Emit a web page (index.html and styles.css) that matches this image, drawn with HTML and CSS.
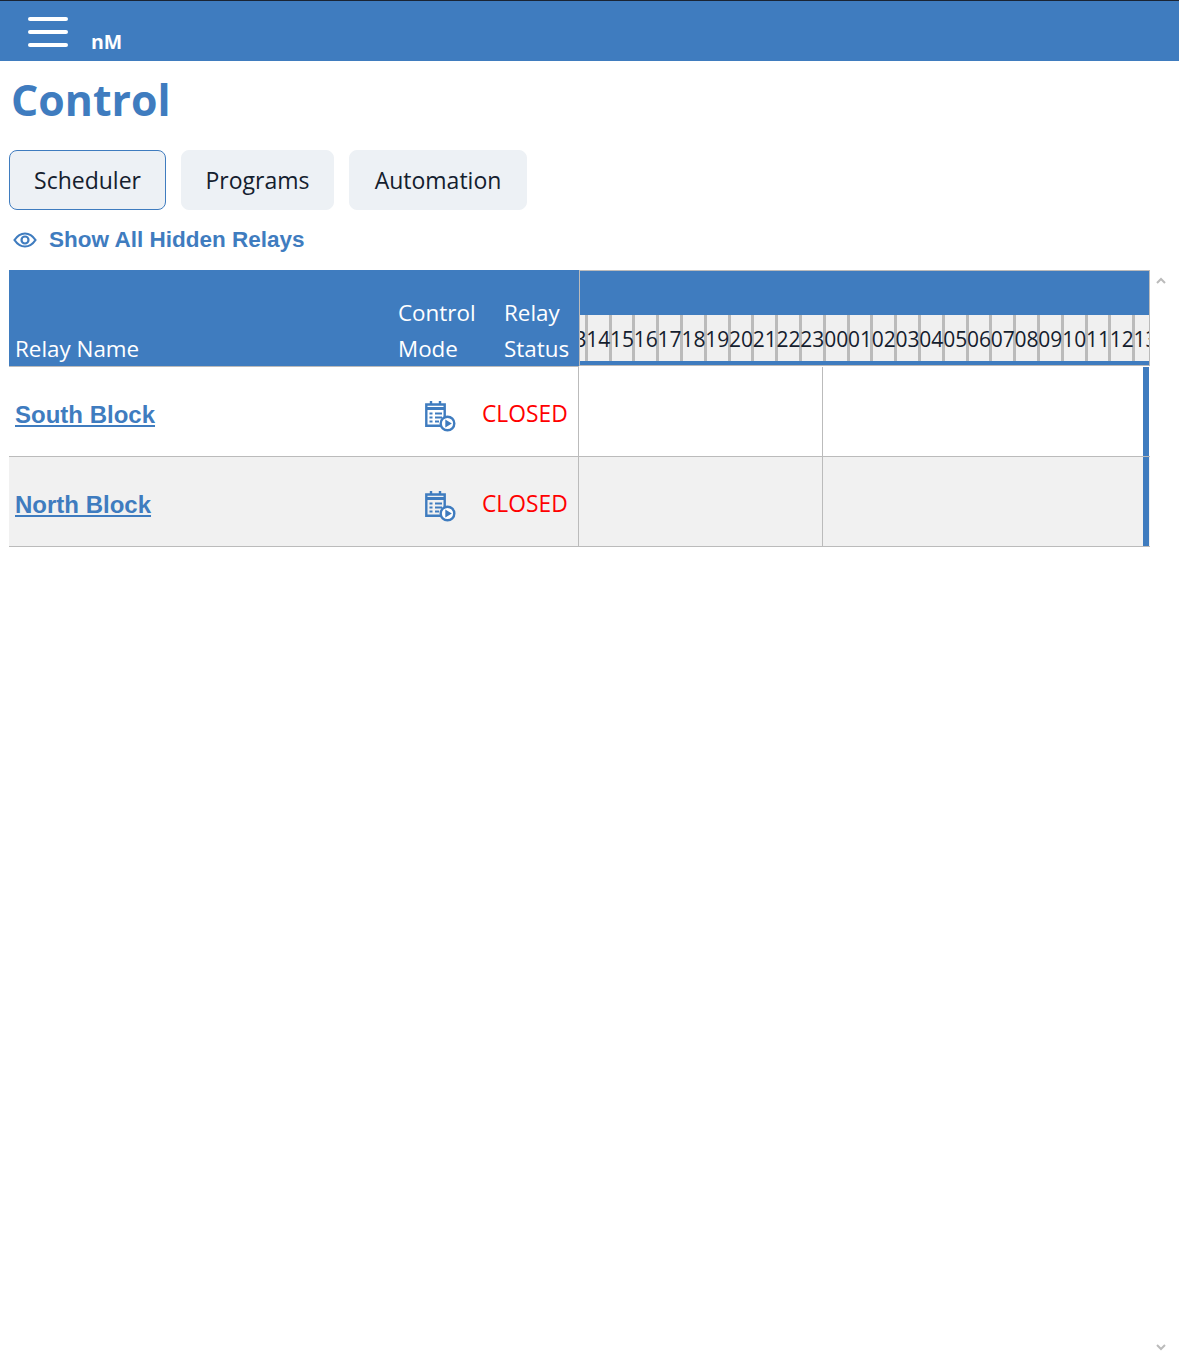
FILE: index.html
```html
<!DOCTYPE html>
<html lang="en">
<head>
<meta charset="utf-8">
<title>Control</title>
<link rel="stylesheet" href="styles.css">
</head>
<body>
<header class="topbar">
  <button class="burger" aria-label="Menu"><span></span><span></span><span></span></button>
  <span class="brand">nM</span>
</header>
<main class="page">
  <h1 class="title">Control</h1>
  <nav class="tabs">
    <a class="tab tab-active">Scheduler</a>
    <a class="tab">Programs</a>
    <a class="tab">Automation</a>
  </nav>
  <a class="show-hidden">
    <svg class="eye" viewBox="0 0 24 16" width="24" height="16" fill="none" stroke="#3f7cbf" stroke-width="2.200"><path d="M1.500 8C4.500 3.500 8 1.500 12 1.500S19.500 3.500 22.500 8C19.500 12.500 16 14.500 12 14.500S4.500 12.500 1.500 8Z"/><circle cx="12" cy="8" r="3.500"/></svg>
    <span>Show All Hidden Relays</span>
  </a>
  <section class="sched">
    <div class="thead">
      <div class="thead-cols">
        <div class="th th-name">Relay Name</div>
        <div class="th">Control<br>Mode</div>
        <div class="th">Relay<br>Status</div>
      </div>
      <div class="thead-chart">
        <div class="band"></div>
        <div class="hours">
          <span class="hour hour-first">13</span><span class="hour">14</span><span class="hour">15</span><span class="hour">16</span><span class="hour">17</span><span class="hour">18</span><span class="hour">19</span><span class="hour">20</span><span class="hour">21</span><span class="hour">22</span><span class="hour">23</span><span class="hour">00</span><span class="hour">01</span><span class="hour">02</span><span class="hour">03</span><span class="hour">04</span><span class="hour">05</span><span class="hour">06</span><span class="hour">07</span><span class="hour">08</span><span class="hour">09</span><span class="hour">10</span><span class="hour">11</span><span class="hour">12</span><span class="hour">13</span>
        </div>
      </div>
    </div>
    <div class="row">
      <a class="relay-link">South Block</a>
      <div class="mode">
        <svg class="cal" viewBox="0 0 31 31" width="31" height="31"><use href="#cal-icon"/></svg>
      </div>
      <div class="status">CLOSED</div>
      <div class="slot slot-a"></div>
      <div class="slot slot-b"></div>
    </div>
    <div class="row row-alt">
      <a class="relay-link">North Block</a>
      <div class="mode">
        <svg class="cal" viewBox="0 0 31 31" width="31" height="31"><use href="#cal-icon"/></svg>
      </div>
      <div class="status">CLOSED</div>
      <div class="slot slot-a"></div>
      <div class="slot slot-b"></div>
    </div>
  </section>
</main>
<svg class="defs" width="0" height="0">
  <symbol id="cal-icon" viewBox="0 0 31 31">
    <path d="M1.300 3.500H19.700V24.700H1.300Z" fill="none" stroke="#3f7cbf" stroke-width="2.400"/>
    <path d="M1 7.500H20" stroke="#3f7cbf" stroke-width="3"/>
    <path d="M6 0V4M15 0V4" stroke="#3f7cbf" stroke-width="2.400"/>
    <path d="M4.500 12.500H7.500M10 12.500H17M4.500 16.500H7.500M10 16.500H17M4.500 20.500H7.500M10 20.500H14" stroke="#3f7cbf" stroke-width="1.800"/>
    <circle cx="22.500" cy="22.500" r="6.800" fill="#fff" stroke="#3f7cbf" stroke-width="2.400"/>
    <path d="M20.300 18.500V26.500L26.800 22.500Z" fill="#3f7cbf"/>
  </symbol>
</svg>
<svg class="scroll-up" viewBox="0 0 10 7" width="10" height="7" fill="none" stroke="#bbb" stroke-width="2"><path d="M1 6L5 2L9 6"/></svg>
<svg class="scroll-down" viewBox="0 0 10 7" width="10" height="7" fill="none" stroke="#bbb" stroke-width="2"><path d="M1 1L5 5L9 1"/></svg>
</body>
</html>
```
FILE: styles.css
```css
* { box-sizing: border-box; }
html, body { margin: 0; padding: 0; background: #fff; }
body {
  position: relative;
  height: 1351px;
  overflow: hidden;
  font-family: "Open Sans", "Noto Sans", sans-serif;
  color: #14202e;
}
.topbar {
  height: 61px;
  background: #3f7cbf;
  border-top: 1px solid #1a2433;
  display: flex;
  align-items: flex-start;
}
.burger {
  margin: 16px 0 0 28px;
  padding: 0;
  width: 40px;
  height: 30px;
  border: 0;
  background: none;
  display: flex;
  flex-direction: column;
  justify-content: space-between;
}
.burger span {
  display: block;
  height: 4px;
  border-radius: 2px;
  background: #fff;
}
.brand {
  margin: 28px 0 0 23px;
  font-size: 19.500px;
  line-height: 26px;
  font-weight: 700;
  color: #fff;
}
.page { padding: 0 0 0 9px; }
.title {
  margin: 9px 0 0 2px;
  font-size: 42.800px;
  line-height: 60px;
  font-weight: 700;
  color: #3f7cbf;
}
.tabs {
  display: grid;
  grid-template-columns: 157px 153px 178px;
  gap: 15px;
  margin-top: 20px;
}
.tab {
  height: 60px;
  display: flex;
  align-items: center;
  justify-content: center;
  border: 1px solid #edf1f5;
  border-radius: 8px;
  background: #edf1f5;
  font-size: 23px;
  font-weight: 500;
  color: #14202e;
}
.tab-active { border-color: #3f7cbf; }
.show-hidden {
  display: flex;
  align-items: center;
  gap: 12px;
  height: 30px;
  margin: 15px 0 0 4px;
  font-family: "Liberation Sans", Arial, sans-serif;
  font-size: 22.500px;
  font-weight: 700;
  color: #3f7cbf;
}
.eye { flex: none; }
.sched {
  width: 1141px;
  margin-top: 15px;
}
.thead { display: flex; height: 97px; align-items: flex-start; }
.thead-cols {
  width: 570px;
  height: 97px;
  background: #3f7cbf;
  border-bottom: 1px solid #bbb;
  display: grid;
  grid-template-columns: 383px 106px 81px;
  align-items: end;
}
.th {
  margin-bottom: -1px;
  padding: 0 0 0 6px;
  font-size: 22.400px;
  line-height: 36px;
  color: #fff;
}
.thead-chart {
  width: 571px;
  height: 96px;
  border: 1px solid #bbb;
  display: flex;
  flex-direction: column;
  background: #3f7cbf;
  overflow: hidden;
}
.band { height: 44px; flex: none; }
.hours {
  display: flex;
  height: 46px;
  flex: none;
  background: #f0f0f0;
  margin-left: -16px;
}
.hour {
  flex: 0 0 23.800px;
  width: 23.800px;
  border-right: 3px solid #bbb;
  text-align: center;
  font-size: 21px;
  line-height: 48px;
  color: #14202e;
  white-space: nowrap;
  display: flex;
  justify-content: center;
}
.row {
  display: grid;
  grid-template-columns: 383px 106px 81px 244px 327px;
  height: 90px;
  background: #fff;
  border-bottom: 1px solid #bbb;
  align-items: center;
}
.row-alt { background: #f1f1f1; }
.relay-link {
  padding: 7px 0 0 6px;
  justify-self: start;
  font-family: "Liberation Sans", Arial, sans-serif;
  font-size: 24px;
  font-weight: 700;
  color: #3f7cbf;
  text-decoration: underline;
}
.mode { padding: 9px 0 0 33px; display: flex; }
.status {
  height: 100%;
  border-right: 1px solid #bbb;
  display: flex;
  align-items: center;
  justify-content: flex-start;
  font-size: 22.800px;
  color: #f00;
  margin-left: -16px;
  padding-top: 3px;
}
.slot { height: 100%; }
.slot-a { border-right: 1px solid #bbb; }
.slot-b { border-right: 6px solid #3f7cbf; margin-right: 1px; }
.defs { position: absolute; }
.scroll-up { position: absolute; left: 1156px; top: 277px; }
.scroll-down { position: absolute; left: 1156px; top: 1344px; }
```
